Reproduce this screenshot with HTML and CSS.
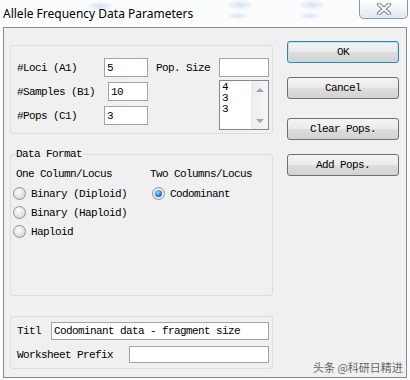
FILE: index.html
```html
<!DOCTYPE html>
<html lang="en">
<head>
  <meta charset="UTF-8">
  <title>Allele Frequency Data Parameters</title>
  <link rel="stylesheet" href="styles.css">
</head>
<body>
  <div class="titlebar">
    <span class="title">Allele Frequency Data Parameters</span>
    <div class="close">
      <svg width="20" height="12" viewBox="0 0 20 12">
        <path d="M5 1.5 L15 10.5 M15 1.5 L5 10.5" stroke="#7a8594" stroke-width="4.2" stroke-linecap="round"/>
        <path d="M5 1.5 L15 10.5 M15 1.5 L5 10.5" stroke="#f4f6f9" stroke-width="2.2" stroke-linecap="round"/>
      </svg>
    </div>
  </div>

  <div class="client">
    <div class="main">
      <div class="group params">
        <div class="fields">
          <div class="row"><label class="lbl-87">#Loci (A1)</label><input class="box w44" value="5"></div>
          <div class="row"><label class="lbl-91">#Samples (B1)</label><input class="box w40" value="10"></div>
          <div class="row"><label class="lbl-87">#Pops (C1)</label><input class="box w44" value="3"></div>
        </div>
        <div class="pops">
          <div class="row"><label class="lbl-63">Pop. Size</label><input class="box w50" value=""></div>
          <div class="listbox">
            <div class="items">
              <div>4</div>
              <div>3</div>
              <div>3</div>
            </div>
            <div class="scroll">
              <span class="arrow up"></span>
              <span class="arrow down"></span>
            </div>
          </div>
        </div>
      </div>

      <fieldset class="group format">
        <legend>Data Format</legend>
        <div class="cols">
          <div class="col first">
            <div class="head">One Column/Locus</div>
            <div class="radio"><span class="dot"></span>Binary (Diploid)</div>
            <div class="radio"><span class="dot"></span>Binary (Haploid)</div>
            <div class="radio"><span class="dot"></span>Haploid</div>
          </div>
          <div class="col">
            <div class="head">Two Columns/Locus</div>
            <div class="radio"><span class="dot checked"></span>Codominant</div>
          </div>
        </div>
      </fieldset>

      <div class="group names">
        <div class="row"><label class="lbl-34">Titl</label><input class="box w218 tall" value="Codominant data - fragment size"></div>
        <div class="row"><label class="lbl-112">Worksheet Prefix</label><input class="box w140" value=""></div>
      </div>
    </div>

    <div class="buttons">
      <button class="btn default">OK</button>
      <button class="btn cancel">Cancel</button>
      <button class="btn clear">Clear Pops.</button>
      <button class="btn add">Add Pops.</button>
    </div>

    <div class="watermark">头条 @科研日精进</div>
  </div>
</body>
</html>
```

FILE: styles.css
```css
* {
  box-sizing: border-box;
}
body {
  margin: 0;
  width: 410px;
  height: 380px;
  overflow: hidden;
  background: #fbfcfe;
  font-family: 'Liberation Mono', monospace;
  font-size: 11px;
  letter-spacing: -0.6px;
  color: #000;
}
.titlebar {
  height: 27px;
  display: flex;
  justify-content: space-between;
  align-items: flex-start;
  padding-left: 3px;
  background:
    radial-gradient(ellipse 14px 5px at 100px 6px, rgba(160, 190, 230, 0.45), transparent),
    radial-gradient(ellipse 14px 5px at 240px 5px, rgba(160, 190, 230, 0.45), transparent),
    radial-gradient(ellipse 14px 5px at 312px 5px, rgba(160, 190, 230, 0.45), transparent),
    radial-gradient(ellipse 12px 4px at 238px 16px, rgba(170, 195, 230, 0.4), transparent),
    radial-gradient(ellipse 12px 4px at 310px 16px, rgba(170, 195, 230, 0.4), transparent),
    #fbfcfe;
}
.title {
  font-family: 'Noto Sans', sans-serif;
  font-size: 12px;
  letter-spacing: 0;
  line-height: 28px;
}
.close {
  width: 49px;
  height: 19px;
  margin-right: 2px;
  border: 1px solid #8d96a3;
  border-top: none;
  border-radius: 0 0 5px 5px;
  background: linear-gradient(#fdfdfe, #eef2f8 60%, #dfe8f4);
  display: flex;
  align-items: center;
  justify-content: center;
}

.client {
  position: relative;
  width: 404px;
  height: 351px;
  margin-left: 3px;
  border: 1px solid #8a8a8a;
  background: #f0f0f0;
  display: flex;
  gap: 14px;
  padding-left: 6px;
}
.main {
  width: 263px;
  padding-top: 17px;
}
.group {
  border: 1px solid #d8dfe5;
  border-radius: 3px;
}
.row {
  display: flex;
  align-items: center;
}
label, .head, .radio, legend, .items {
  line-height: 12px;
}
.box {
  height: 19px;
  border: 1px solid #a3a3a3;
  background: #fff;
  padding: 0 2px;
  font: inherit;
  letter-spacing: -0.6px;
  color: #000;
}
.w44 { width: 44px; }
.w40 { width: 40px; }
.w50 { width: 50px; }
.w218 { width: 218px; }
.w140 { width: 140px; height: 17px; }
.tall { height: 18px; }
.lbl-87 { width: 87px; }
.lbl-91 { width: 91px; }
.lbl-63 { width: 63px; }
.lbl-34 { width: 34px; }
.lbl-112 { width: 112px; }

.params {
  height: 89px;
  display: flex;
  padding: 12px 0 0 6px;
}
.fields {
  width: 131px;
  display: flex;
  flex-direction: column;
  gap: 5px;
}
.pops {
  margin-left: 8px;
}
.listbox {
  margin: 3px 0 0 63px;
  width: 50px;
  height: 50px;
  border: 1px solid #828790;
  background: #fff;
  display: flex;
}
.items {
  flex: 1;
  padding: 1px 0 0 2px;
  line-height: 11px;
}
.scroll {
  width: 17px;
  background: linear-gradient(to right, #ececec, #f6f6f6);
  display: flex;
  flex-direction: column;
  justify-content: space-between;
  align-items: center;
  padding: 7px 0 6px;
}
.arrow {
  width: 0;
  height: 0;
  border-left: 4px solid transparent;
  border-right: 4px solid transparent;
}
.arrow.up { border-bottom: 4px solid #a4a4a4; }
.arrow.down { border-top: 4px solid #a4a4a4; }

.format {
  margin: 14px 0 0;
  height: 148px;
  padding: 0 0 0 4px;
  min-width: 0;
}
.format legend {
  padding: 0 1px;
}
.cols {
  display: flex;
  margin: 8px 0 0 -2px;
}
.col.first {
  width: 137px;
}
.head {
  margin: 0 0 4px 3px;
}
.col:not(.first) .head {
  margin-left: 0;
}
.col:not(.first) .radio {
  margin-left: 2px;
}
.radio {
  height: 19px;
  display: flex;
  align-items: center;
}
.dot {
  width: 13px;
  height: 13px;
  margin-right: 5px;
  border-radius: 50%;
  border: 1px solid #8f9396;
  background: radial-gradient(circle at 40% 35%, #fdfdfd, #dcdcdc 70%, #cfcfcf);
  display: flex;
  align-items: center;
  justify-content: center;
}
.dot.checked {
  background: radial-gradient(circle, #f6f6f6, #e2e2e2);
}
.dot.checked::after {
  content: "";
  width: 7px;
  height: 7px;
  border-radius: 50%;
  background: radial-gradient(circle at 40% 35%, #a8dcfb, #2a7cc0 55%, #0d3f78);
}

.names {
  margin-top: 20px;
  height: 53px;
  padding: 5px 0 0 6px;
  display: flex;
  flex-direction: column;
  gap: 6px;
}

.buttons {
  width: 112px;
  padding-top: 13px;
  display: flex;
  flex-direction: column;
}
.btn {
  height: 22px;
  border: 1px solid #707070;
  border-radius: 3px;
  background: linear-gradient(#f4f4f4, #ebebeb 48%, #dddddd 52%, #d2d2d2);
  font: inherit;
  letter-spacing: -0.6px;
  color: #000;
  padding: 0;
}
.btn.default {
  border-color: #3c7fb1;
  box-shadow: inset 0 0 0 1px #b8e2f8;
}
.btn.cancel { margin-top: 14px; }
.btn.clear { margin-top: 19px; }
.btn.add { margin-top: 14px; }

.watermark {
  position: absolute;
  left: 309px;
  top: 331px;
  font-family: 'Noto Sans CJK SC', sans-serif;
  font-size: 11px;
  letter-spacing: 0;
  line-height: 16px;
  color: #666;
}
```
